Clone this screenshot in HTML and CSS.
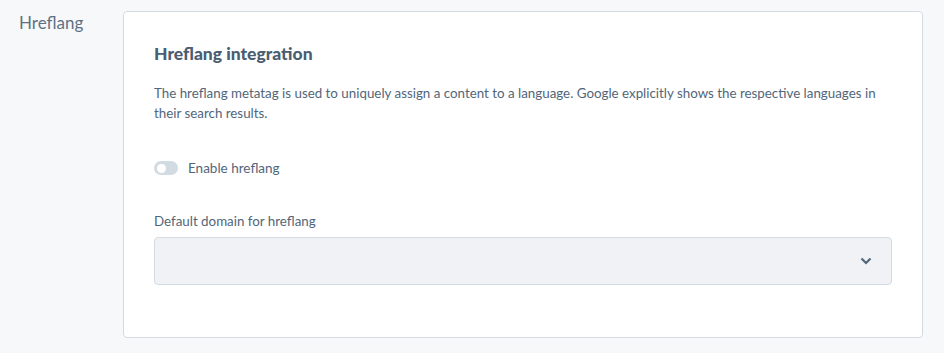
FILE: index.html
```html
<!DOCTYPE html>
<html>
<head>
<meta charset="utf-8">
<link rel="stylesheet" href="styles.css">
</head>
<body>
<div class="row">
  <div class="row-label">Hreflang</div>
  <div class="card">
    <h2 class="card-title">Hreflang integration</h2>
    <p class="card-desc">The hreflang metatag is used to uniquely assign a content to a language. Google explicitly shows the respective languages in their search results.</p>
    <label class="toggle-row">
      <span class="toggle"><span class="knob"></span></span>
      <span class="toggle-text">Enable hreflang</span>
    </label>
    <div class="field-label">Default domain for hreflang</div>
    <div class="select">
      <svg class="chev" width="12" height="8" viewBox="0 0 12 8"><path d="M1.5 1.5 L6 6 L10.5 1.5" fill="none" stroke="#52667a" stroke-width="2.2" stroke-linecap="butt"/></svg>
    </div>
  </div>
</div>
</body>
</html>
```
FILE: styles.css
```css
* { box-sizing: border-box; }
html, body { margin: 0; padding: 0; }
body {
  background: #f7f8fa;
  font-family: "Lato", "Noto Sans", sans-serif;
  color: #52667a;
  width: 944px;
  height: 353px;
  overflow: hidden;
}
.row {
  display: flex;
  padding: 11px 21px 0 19px;
}
.row-label {
  width: 104px;
  flex: none;
  font-size: 17px;
  line-height: 24px;
  color: #5e7184;
}
.card {
  flex: 1;
  background: #fff;
  border: 1px solid #d3dbe2;
  border-radius: 4px;
  padding: 30px 30px 52px 30px;
}
.card-title {
  margin: 0;
  font-size: 17.5px;
  line-height: 24px;
  font-weight: 900;
  color: #4a5d71;
}
.card-desc {
  margin: 17px 0 0 0;
  font-size: 13.35px;
  line-height: 20px;
  color: #52667a;
}
.toggle-row {
  display: flex;
  align-items: center;
  gap: 10px;
  margin-top: 35px;
  height: 20px;
}
.toggle {
  width: 24px;
  height: 14px;
  border-radius: 7px;
  background: #d3dbe2;
  display: flex;
  align-items: center;
  padding-left: 3px;
}
.knob {
  width: 9px;
  height: 9px;
  border-radius: 50%;
  background: #fff;
}
.toggle-text {
  font-size: 13.5px;
  line-height: 20px;
}
.field-label {
  margin-top: 33px;
  font-size: 13.35px;
  line-height: 20px;
}
.select {
  margin-top: 6px;
  height: 48px;
  background: #f0f2f5;
  border: 1px solid #d3dbe2;
  border-radius: 4px;
  display: flex;
  align-items: center;
  justify-content: flex-end;
  padding-right: 19px;
}
.chev { display: block; }
```
